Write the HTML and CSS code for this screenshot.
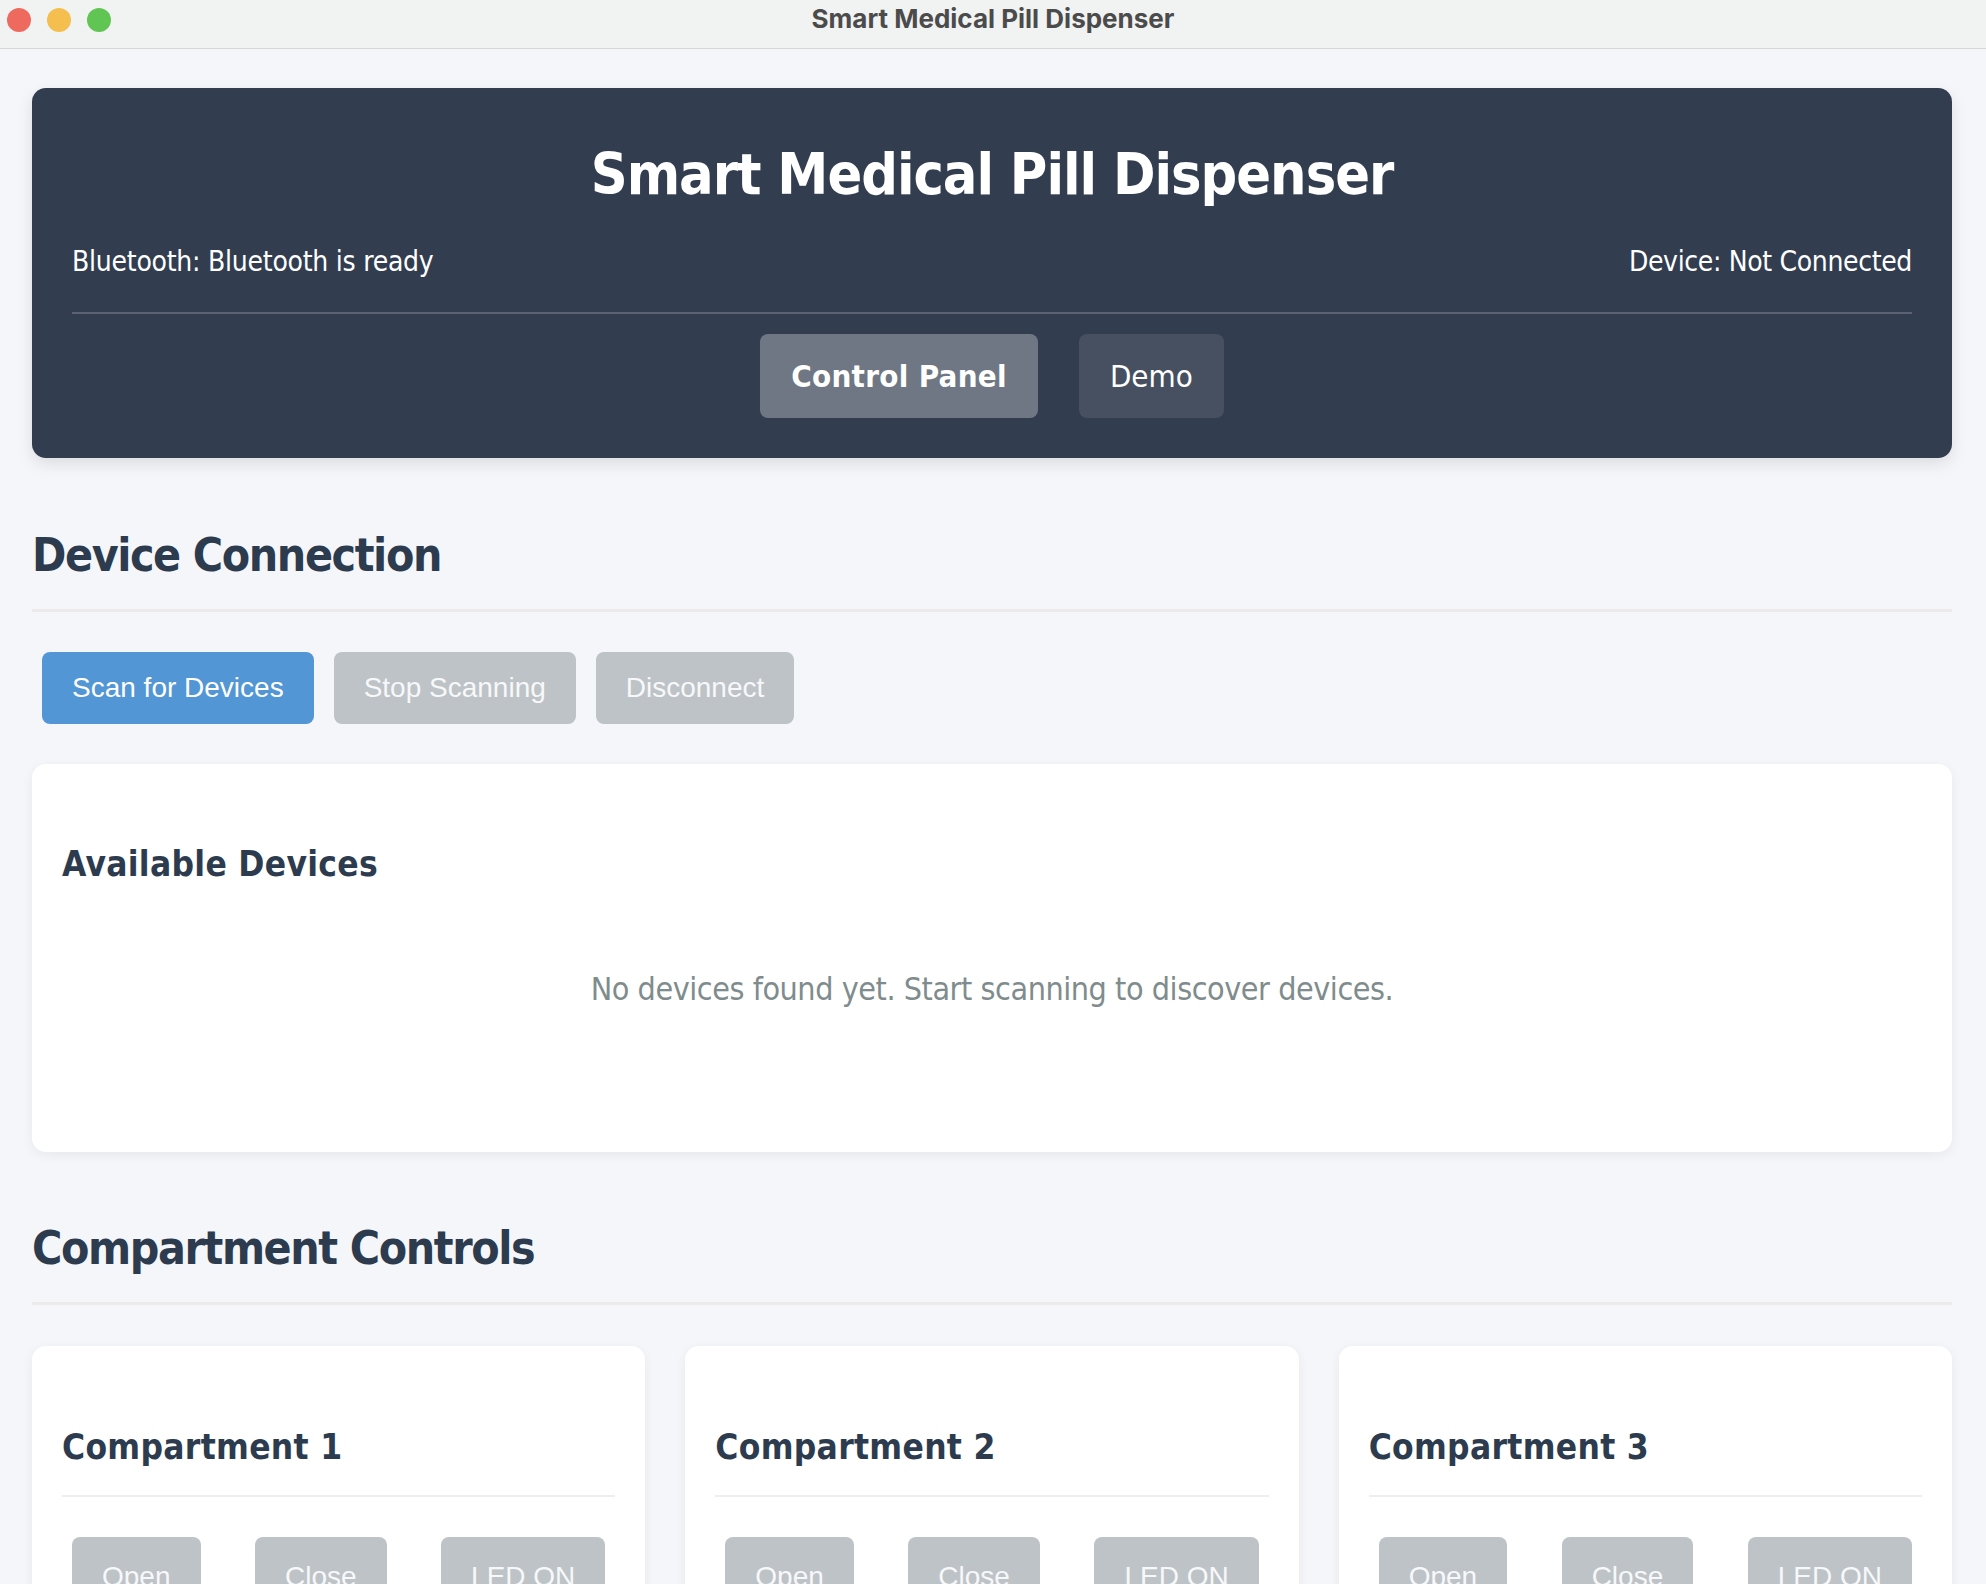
FILE: index.html
```html
<!DOCTYPE html>
<html lang="en">
<head>
<meta charset="utf-8">
<title>Smart Medical Pill Dispenser</title>
<link rel="stylesheet" href="styles.css">
</head>
<body>
<div class="titlebar">
  <div class="lights">
    <span class="light red"></span>
    <span class="light yellow"></span>
    <span class="light green"></span>
  </div>
  <div class="wintitle">Smart Medical Pill Dispenser</div>
  <div></div>
</div>

<main class="app">
  <header class="hero">
    <h1 class="hero-title">Smart Medical Pill Dispenser</h1>
    <div class="status-row">
      <span class="status-left">Bluetooth: Bluetooth is ready</span>
      <span class="status-right">Device: Not Connected</span>
    </div>
    <nav class="nav">
      <button class="nav-btn active">Control Panel</button>
      <button class="nav-btn">Demo</button>
    </nav>
  </header>

  <section class="section">
    <h2 class="section-title">Device Connection</h2>
    <div class="btn-row">
      <button class="btn btn-primary">Scan for Devices</button>
      <button class="btn btn-disabled">Stop Scanning</button>
      <button class="btn btn-disabled">Disconnect</button>
    </div>
    <div class="card devices-card">
      <h3 class="card-title">Available Devices</h3>
      <p class="empty">No devices found yet. Start scanning to discover devices.</p>
    </div>
  </section>

  <section class="section">
    <h2 class="section-title second">Compartment Controls</h2>
    <div class="comp-grid">
      <div class="card comp-card">
        <h3 class="card-title comp-title">Compartment 1</h3>
        <div class="comp-actions">
          <button class="btn btn-disabled comp-btn">Open</button>
          <button class="btn btn-disabled comp-btn">Close</button>
          <button class="btn btn-disabled comp-btn">LED ON</button>
        </div>
      </div>
      <div class="card comp-card">
        <h3 class="card-title comp-title">Compartment 2</h3>
        <div class="comp-actions">
          <button class="btn btn-disabled comp-btn">Open</button>
          <button class="btn btn-disabled comp-btn">Close</button>
          <button class="btn btn-disabled comp-btn">LED ON</button>
        </div>
      </div>
      <div class="card comp-card">
        <h3 class="card-title comp-title">Compartment 3</h3>
        <div class="comp-actions">
          <button class="btn btn-disabled comp-btn">Open</button>
          <button class="btn btn-disabled comp-btn">Close</button>
          <button class="btn btn-disabled comp-btn">LED ON</button>
        </div>
      </div>
    </div>
  </section>
</main>
</body>
</html>
```

FILE: styles.css
```css
* { box-sizing: border-box; }

html, body {
  margin: 0;
  padding: 0;
}

body {
  background: #f5f6fa;
  color: #2d3b4e;
  font-family: "DejaVu Sans Condensed", "DejaVu Sans", sans-serif;
  font-stretch: condensed;
  font-size: 28px;
}

/* window chrome */
.titlebar {
  height: 49px;
  background: #f1f2f2;
  border-bottom: 1px solid #d6d6d6;
  display: grid;
  grid-template-columns: 1fr auto 1fr;
  align-items: start;
}

.lights {
  display: flex;
  gap: 16px;
  padding: 8px 0 0 7px;
}

.light {
  width: 24px;
  height: 24px;
  border-radius: 50%;
  display: block;
}
.light.red { background: #ee6a5f; }
.light.yellow { background: #f5bf4f; }
.light.green { background: #61c554; }

.wintitle {
  font-family: Inter, "Noto Sans", sans-serif;
  font-stretch: normal;
  font-weight: 700;
  font-size: 26px;
  line-height: 38px;
  color: #4b4b4b;
}

/* page */
.app {
  padding: 39px 34px 40px 32px;
}

.hero {
  background: #323d4f;
  border-radius: 14px;
  padding: 40px;
  color: #ffffff;
  box-shadow: 0 6px 16px rgba(0, 0, 0, 0.1);
}

.hero-title {
  margin: 0;
  text-align: center;
  font-size: 57px;
  line-height: 92px;
  font-weight: 700;
  letter-spacing: -1px;
}

.status-row {
  display: flex;
  justify-content: space-between;
  margin-top: 22px;
  line-height: 40px;
  padding-bottom: 30px;
  border-bottom: 2px solid rgba(255, 255, 255, 0.2);
}

.status-left { letter-spacing: -0.25px; }
.status-right { letter-spacing: -0.35px; }

.nav {
  display: flex;
  justify-content: center;
  gap: 41px;
  margin-top: 20px;
}

.nav-btn {
  font-family: inherit;
  font-stretch: condensed;
  font-size: 31px;
  height: 84px;
  line-height: 84px;
  padding: 0 31px;
  border: none;
  border-radius: 8px;
  color: #ffffff;
  background: rgba(255, 255, 255, 0.1);
}

.nav-btn.active {
  background: rgba(255, 255, 255, 0.3);
  font-weight: 700;
  letter-spacing: 0.3px;
}

.section-title {
  margin: 69px 0 0;
  font-size: 46px;
  line-height: 56px;
  font-weight: 700;
  letter-spacing: -1.4px;
  padding-bottom: 26px;
  border-bottom: 3px solid #ecebea;
}

.section-title.second {
  margin-top: 68px;
  padding-bottom: 26px;
}

.btn-row {
  display: flex;
  gap: 20px;
  padding-left: 10px;
  margin-top: 40px;
}

.btn {
  font-family: "Liberation Sans", Arial, sans-serif;
  font-stretch: normal;
  font-size: 28px;
  line-height: 32px;
  padding: 20px 30px;
  border: none;
  border-radius: 8px;
  color: #ffffff;
}

.btn-primary { background: #5296d5; }
.btn-disabled { background: #bec3c7; color: #f7f8f9; }

.card {
  background: #ffffff;
  border-radius: 14px;
  padding: 30px 30px 30px;
  box-shadow: 0 3px 12px rgba(0, 0, 0, 0.06);
}

.devices-card {
  margin-top: 40px;
}

.card-title {
  margin: 48px 0 0;
  font-size: 35px;
  line-height: 45px;
  font-weight: 700;
  letter-spacing: 0.3px;
}

.empty {
  margin: 0;
  text-align: center;
  color: #7f8c8d;
  font-size: 32px;
  letter-spacing: -0.45px;
  line-height: 40px;
  padding: 82px 0 113px;
}

.comp-grid {
  display: grid;
  grid-template-columns: repeat(3, 1fr);
  gap: 40px;
  margin-top: 41px;
}

.comp-title {
  margin-top: 49px;
  padding-bottom: 25px;
  border-bottom: 2px solid #eeeeee;
}

.comp-actions {
  display: flex;
  justify-content: space-between;
  margin-top: 40px;
}

.comp-btn {
  margin: 0 10px;
  padding: 24px 30px;
}
```
